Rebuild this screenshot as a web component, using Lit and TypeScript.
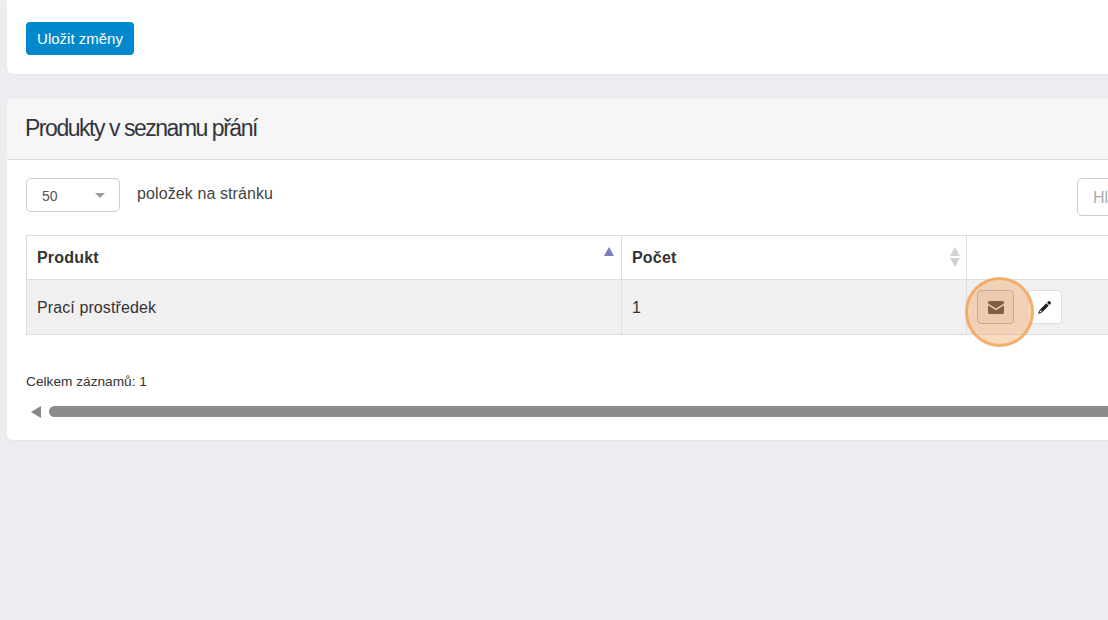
import { LitElement, html, css } from "lit";
import { customElement } from "lit/decorators.js";

@customElement("app-root")
export class AppRoot extends LitElement {
  static styles = css`
    :host { display: block; width: 1108px; height: 620px; overflow: hidden; position: relative; background: #ecedf1; font-family: "Liberation Sans", Arial, sans-serif; color: #333; }
    .page { width: 1400px; padding-left: 7px; box-sizing: border-box; display: flex; flex-direction: column; gap: 25px; }
    .card { background: #fff; border-radius: 0 0 6px 6px; box-shadow: 0 1px 1px rgba(0,0,0,.04); }
    .top { height: 74px; padding: 22px 19px 0; box-sizing: border-box; }
    .save { display: block; width: 108px; height: 33px; border: 0; border-radius: 4px; background: #0088cc; color: #fff; font: 15px "Liberation Sans", Arial, sans-serif; padding: 0; }
    .list { height: 341px; border-radius: 6px; }
    .head { height: 61px; box-sizing: border-box; background: #f6f6f6; border-bottom: 1px solid #dadada; border-radius: 6px 6px 0 0; padding: 0 18px; display: flex; align-items: center; }
    h2 { margin: 0; font-size: 23px; font-weight: 400; letter-spacing: -1.47px; color: #33353f; position: relative; top: -1px; }
    .body { padding: 18px 19px 0; }
    .controls { height: 35px; display: flex; align-items: flex-start; gap: 17px; position: relative; }
    .select { width: 94px; height: 34px; box-sizing: border-box; border: 1px solid #ccc; border-radius: 5px; padding: 0 15px; display: flex; align-items: center; justify-content: space-between; font-size: 14px; color: #555; }
    .select span { position: relative; top: 1px; }
    .caret { width: 0; height: 0; border-left: 5px solid transparent; border-right: 5px solid transparent; border-top: 5px solid #999; margin-right: -1px; }
    .per { font-size: 16px; color: #444; letter-spacing: .1px; padding-top: 7px; }
    .search { position: absolute; left: 1051px; top: 0; width: 200px; height: 38px; box-sizing: border-box; border: 1px solid #ccc; border-radius: 5px; padding: 10px 15px; font-size: 16px; line-height: 18px; color: #aaa; }
    table { margin-top: 22px; border-collapse: collapse; table-layout: fixed; width: 1200px; }
    col.c1 { width: 595px; } col.c2 { width: 345px; }
    th, td { border: 1px solid #ddd; padding: 0 10px; text-align: left; position: relative; color: #333; }
    th { height: 43px; font-size: 16px; font-weight: 700; letter-spacing: .2px; }
    td { height: 54px; background: #f0f0f0; font-size: 16px; letter-spacing: .1px; }
    td.text { padding-top: 2px; height: 52px; }
    .up, .down { position: absolute; width: 0; height: 0; }
    .up { border-left: 5px solid transparent; border-right: 5px solid transparent; border-bottom: 9px solid #7b7bc8; right: 7px; top: 11px; }
    .up.off { border-left-width: 5.500px; border-right-width: 5.500px; border-bottom-color: #d2d2d2; top: 11px; right: 6px; }
    .down { border-left: 5.500px solid transparent; border-right: 5.500px solid transparent; border-top: 9px solid #d2d2d2; right: 6px; top: 22px; }
    .actions { display: flex; gap: 13px; padding-left: 0; }
    .btn { width: 37px; height: 34px; box-sizing: border-box; border: 1px solid #ddd; border-radius: 4px; background: #fff; display: flex; align-items: center; justify-content: center; color: #222; }
    .btn.edit { width: 35px; }
    .btn.mail { background: #e6e6e6; border-color: #adadad; color: #333; }
    svg { display: block; fill: currentColor; }
    .total { font-size: 13.7px; color: #333; margin-top: 40px; line-height: 14px; }
    .scroll { margin-top: 16px; display: flex; align-items: center; gap: 8px; padding-left: 5px; }
    .arrow { width: 0; height: 0; margin-top: 1px; border-top: 6px solid transparent; border-bottom: 6px solid transparent; border-right: 10px solid #888; }
    .thumb { height: 11px; width: 1200px; background: #8c8c8c; border-radius: 6px; }
    .spot { position: absolute; left: 965px; top: 277px; width: 69px; height: 70px; box-sizing: border-box; border-radius: 50%; border: 3px solid rgba(244,164,96,.85); background: rgba(244,164,96,.4); pointer-events: none; }
  `;

  render() {
    return html`
      <div class="page">
        <section class="card top"><button class="save">Uložit změny</button></section>
        <section class="card list">
          <div class="head"><h2>Produkty v seznamu přání</h2></div>
          <div class="body">
            <div class="controls">
              <div class="select"><span>50</span><i class="caret"></i></div>
              <div class="per">položek na stránku</div>
              <div class="search">Hledat</div>
            </div>
            <table>
              <colgroup><col class="c1" /><col class="c2" /><col /></colgroup>
              <thead><tr>
                <th>Produkt<i class="up"></i></th>
                <th>Počet<i class="up off"></i><i class="down"></i></th>
                <th></th>
              </tr></thead>
              <tbody><tr>
                <td class="text">Prací prostředek</td>
                <td class="text">1</td>
                <td>
                  <div class="actions">
                    <span class="btn mail">
                      <svg width="16" height="13" viewBox="0 0 16 13"><path d="M1.5 0h13A1.5 1.5 0 0 1 16 1.500v.9L8 7.400 0 2.400v-.9A1.500 1.500 0 0 1 1.500 0zM0 4.200l8 5 8-5v7.300a1.500 1.500 0 0 1-1.500 1.500h-13A1.500 1.500 0 0 1 0 11.500z"/></svg>
                    </span>
                    <span class="btn edit">
                      <svg width="13" height="13" viewBox="0 0 13 13"><path d="M10.300.3a1 1 0 0 1 1.400 0l1 1a1 1 0 0 1 0 1.400l-1.300 1.300L9 1.600zM8.300 2.300 10.700 4.700 4.200 11.200 0 13l1.800-4.200zM2.500 9.200 1.700 11.300 3.800 10.500 3.900 10z"/></svg>
                    </span>
                  </div>
                </td>
              </tr></tbody>
            </table>
            <div class="total">Celkem záznamů: 1</div>
            <div class="scroll"><i class="arrow"></i><div class="thumb"></div></div>
          </div>
        </section>
      </div>
      <div class="spot"></div>
    `;
  }
}
